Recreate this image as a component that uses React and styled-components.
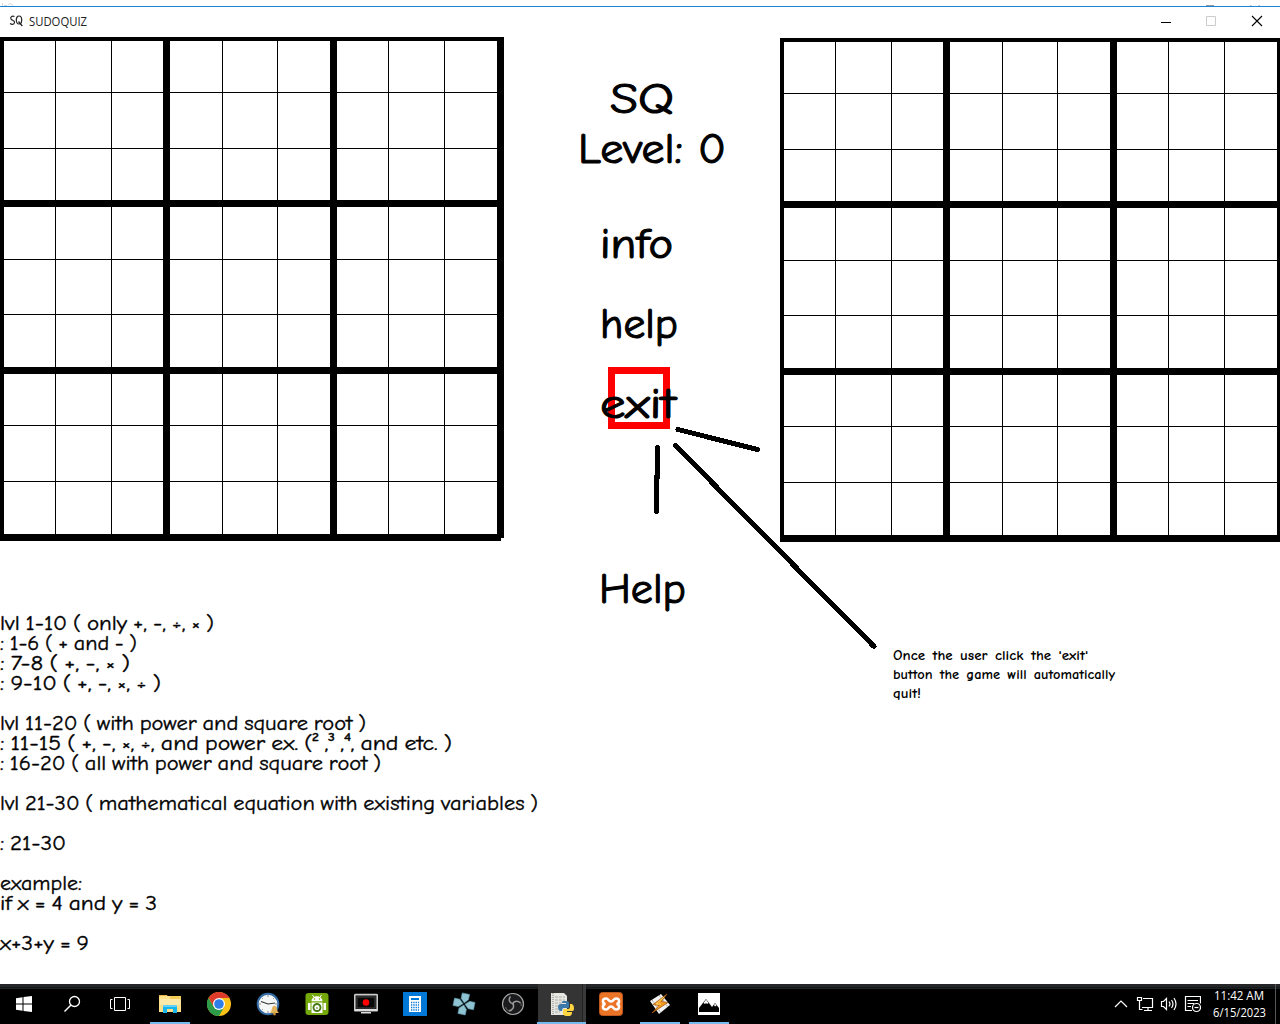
import React, { useLayoutEffect, useRef, useState } from "react";
import styled, { createGlobalStyle } from "styled-components";

const Global = createGlobalStyle`
  * { box-sizing: border-box; }
  body { margin: 0; background: #fff; overflow: hidden; }
`;
const hand = `"Comic Sans MS", "Comic Neue", Inter, "Noto Sans", sans-serif`;
const ui = `"Segoe UI", "Open Sans", "Noto Sans", sans-serif`;

const Screen = styled.div`
  position: relative;
  width: 1280px;
  height: 1024px;
  overflow: hidden;
  display: flex;
  flex-direction: column;
  background: #fff;
  color: #000;
`;
const Behind = styled.div`
  height: 6px;
  flex: none;
  svg { display: block; }
`;
const TitleBar = styled.header`
  height: 31px;
  flex: none;
  border-top: 1px solid #1883d7;
  display: flex;
  align-items: center;
  padding: 0 17px 2px 9px;
  font: 12px/16px ${ui};
`;
const AppTitle = styled.div`
  margin-left: 6px;
  padding-top: 2px;
  flex: 1;
  color: #222;
`;
const WindowButtons = styled.div`
  display: flex;
  gap: 34px;
  svg { display: block; }
`;
const Game = styled.main`
  flex: 1;
  min-height: 0;
  display: flex;
  align-items: flex-start;
`;
const Left = styled.section`
  width: 504px;
  flex: none;
`;
const Middle = styled.section`
  width: 276px;
  flex: none;
  padding-top: 1px;
  font: 43px/50px ${hand};
  -webkit-text-stroke: 1.1px #000;
`;
const Right = styled.section`
  width: 500px;
  flex: none;
  padding-top: 1px;
  overflow: hidden;
`;
const BoardGrid = styled.div`
  width: 504px;
  height: 504px;
  padding: 4px 7px 7px 4px;
  display: grid;
  grid-template: 159px 160px 160px / 159px 160px 160px;
  gap: 7px;
  background: #000;
  clip-path: ${(p) => (p.$notched ? "polygon(0 0, 100% 0, 100% 501px, 501px 501px, 501px 100%, 0 100%)" : "none")};
`;
const tracks = ["51px 55px 51px", "52px 54px 52px", "51px 55px 52px"];
const Box = styled.div`
  display: grid;
  grid-template-columns: ${(p) => tracks[p.$col]};
  grid-template-rows: ${(p) => tracks[p.$row]};
  gap: 1px;
`;
const Cell = styled.div`
  background: #fff;
`;
const Row = styled.div`
  height: ${(p) => p.$h}px;
  line-height: ${(p) => p.$h}px;
  margin-top: ${(p) => p.$top || 0}px;
  padding-left: ${(p) => p.$left || 0}px;
  white-space: pre;
`;
const Notes = styled.div`
  margin-top: 73px;
  font: 20.5px/20px ${hand};
  word-spacing: -1.6px;
  -webkit-text-stroke: 0.35px #000;
`;
const Caption = styled.div`
  margin: 104px 0 0 113px;
  font: 700 14px/19px ${hand};
  word-spacing: 2px;
`;
const FitSpan = styled.span`
  display: inline-block;
  white-space: pre;
  transform-origin: 0 50%;
`;
const RedFrame = styled.div`
  position: absolute;
  left: 608px;
  top: 367px;
  width: 62px;
  height: 62px;
  border: 7px solid #f00;
`;
const Strokes = styled.svg`
  position: absolute;
  left: 640px;
  top: 420px;
`;
const Front = styled.div`
  position: relative;
  z-index: 1;
`;
const Taskbar = styled.footer`
  height: 40px;
  flex: none;
  display: flex;
  background: linear-gradient(#252627 0 3px, #16191b 3px 4px, #1d2225 4px 5px, #000 5px);
  color: #fff;
`;
const Slot = styled.div`
  width: ${(p) => p.$w || 49}px;
  margin-left: ${(p) => p.$ml || 0}px;
  height: 40px;
  display: flex;
  align-items: center;
  justify-content: center;
  background: ${(p) => (p.$active ? "linear-gradient(90deg, transparent 1px, #343434 1px 45px, #222 45px 46px, #3a3a3a 46px)" : "none")};
  box-shadow: ${(p) => (p.$active ? "inset 0 -2px #76b9ed" : "none")};
  svg { display: block; }
`;
const Running = styled.div`
  width: 40px;
  height: 40px;
  display: flex;
  align-items: center;
  justify-content: center;
  border-bottom: 2px solid #76b9ed;
  padding-top: 2px;
`;
const Tray = styled.div`
  margin-left: auto;
  display: flex;
  align-items: center;
  padding-right: 4px;
  border-right: 1px solid #555;
  margin-right: 4px;
  width: 166px;
  svg { flex: none; }
`;
const Clock = styled.div`
  margin-left: auto;
  width: 53px;
  font: 12px/17px ${ui};
  padding: 0 0 1px;
  margin-right: 5px;
`;

/* Stretches a run of text horizontally to a given width. */
function Fit({ width, children }) {
  const ref = useRef(null);
  const [scale, setScale] = useState(1);
  useLayoutEffect(() => {
    setScale(width / parseFloat(getComputedStyle(ref.current).width));
  }, [width, children]);
  return <FitSpan ref={ref} style={{ transform: `scaleX(${scale})` }}>{children}</FitSpan>;
}

function Board({ notched }) {
  return (
    <BoardGrid $notched={notched}>
      {Array.from({ length: 9 }, (_, b) => (
        <Box key={b} $col={b % 3} $row={Math.floor(b / 3)}>
          {Array.from({ length: 9 }, (_, c) => <Cell key={c} />)}
        </Box>
      ))}
    </BoardGrid>
  );
}

const menu = [
  { text: "SQ", left: 106, top: 36, w: 64 },
  { text: "Level: 0", left: 74, top: 0, w: 148 },
  { text: "info", left: 96, top: 45, w: 73 },
  { text: "help", left: 96, top: 30, w: 78 },
  { text: "exit", left: 96, top: 30, w: 76 },
  { text: "Help", left: 95, top: 135, w: 87 },
];
const notes = [
  ["lvl 1-10 ( only +, -, ÷, × )", 214],
  [": 1-6 ( + and - )", 137],
  [": 7-8 ( +, -, × )", 130],
  [": 9-10 ( +, -, ×, ÷ )", 161],
  null,
  ["lvl 11-20 ( with power and square root )", 366],
  [": 11-15 ( +, -, ×, ÷, and power ex. (² ,³ ,⁴, and etc. )", 452],
  [": 16-20 ( all with power and square root )", 381],
  null,
  ["lvl 21-30 ( mathematical equation with existing variables )", 538],
  null,
  [": 21-30", 66],
  null,
  ["example:", 82],
  ["if x = 4 and y = 3", 157],
  null,
  ["x+3+y = 9", 89],
];
const caption = [
  ["Once the user click the 'exit'", 195],
  ["button the game will automatically", 222],
  ["quit!", 28],
];

const Ic = ({ s = 24, children }) => (
  <svg width={s} height={s} viewBox={`0 0 ${s} ${s}`} fill="none">{children}</svg>
);
const WindowsIcon = () => (
  <Ic><path fill="#fff" d="M4 6.2 10.5 5.3V11.5H4zM11.5 5.1 20 4v7.5h-8.5zM4 12.5h6.5v6.2L4 17.8zM11.5 12.5H20V20l-8.5-1.1z" /></Ic>
);
const SearchIcon = () => (
  <Ic><circle cx="14.5" cy="9.5" r="5" stroke="#fff" strokeWidth="1.3" /><path d="M11 13 4.5 19.5" stroke="#fff" strokeWidth="1.4" /></Ic>
);
const TaskViewIcon = () => (
  <Ic><path stroke="#fff" d="M6.5 5.5h11v13h-11zM4.5 7.5h-2v9h2M19.5 7.5h2v9h-2" /></Ic>
);
const FolderIcon = () => (
  <Ic>
    <path fill="#e8b43c" d="M1 3h8l1 2h-9z" /><path fill="#ffe08a" d="M1 5l1-1h21v16H1z" /><path fill="#f6cb58" d="M12 4h11v3H12z" />
    <path fill="#ffe9a8" d="M2 7h20v6H2z" /><path fill="#19b5ef" d="M5 13h14v8h-4v-4H9v4H5z" /><path fill="#62d0f7" d="M5 13h14v2H5z" />
  </Ic>
);
const ChromeIcon = () => (
  <Ic>
    <circle cx="12" cy="12" r="12" fill="#fbc116" />
    <path fill="#dd3b2c" d="M1.6 6A12 12 0 0 1 22.4 6H12L6.8 15z" />
    <path fill="#2c9c4b" d="M1.6 6A12 12 0 0 0 12 24l5.2-9L6.8 15z" />
    <circle cx="12" cy="12" r="6" fill="#fff" /><circle cx="12" cy="12" r="4.8" fill="#2f7de9" />
  </Ic>
);
const AlarmIcon = () => (
  <Ic>
    <circle cx="12" cy="12" r="10.3" fill="#f5f7f7" stroke="#356ca4" strokeWidth="2" />
    <path d="M12 3v2M12 19v2M3 12h2M19 12h2M5.7 5.7l1 1M18.3 5.7l-1 1M5.7 18.3l1-1" stroke="#889" />
    <path d="M5 9.5 12 12l7-1" stroke="#333" strokeWidth="1.2" />
    <path d="M13.500 21c3-1 1.500-7 5-7.500C22 14 20 20 23.500 21z" fill="#e3b35b" /><circle cx="18.5" cy="22" r="1.4" fill="#c99037" />
  </Ic>
);
const AndroidIcon = () => (
  <Ic>
    <rect x=".5" y="1" width="23" height="22" rx="3" fill="#74a80b" />
    <path d="M6.500 9.300c.3-6.700 10.700-6.700 11 0z" fill="#fff" /><path d="M7.500 3l1.700 2.500M16.500 3l-1.700 2.500" stroke="#fff" />
    <path fill="#fff" d="M6.500 10.500h11V21h-11zM3 11h2.500v7H3zM18.500 11H21v7h-2.500z" />
    <circle cx="9.500" cy="7" r=".8" fill="#74a80b" /><circle cx="14.500" cy="7" r=".8" fill="#74a80b" />
    <circle cx="12" cy="15.500" r="3.500" stroke="#477914" strokeWidth="1.900" /><path d="M12 15v2" stroke="#477914" />
  </Ic>
);
const RecorderIcon = () => (
  <Ic>
    <rect x=".7" y="2.700" width="22.600" height="16" rx="1" fill="#111" stroke="#c9c9c9" strokeWidth="1.800" />
    <rect x="3" y="5" width="18" height="11" fill="#080808" stroke="#444" /><circle cx="12" cy="10.500" r="3.300" fill="#f00" />
    <path fill="#ddd" d="M1 17h22v2H1zM7 20h10v1.500H7z" />
  </Ic>
);
const CalcIcon = () => (
  <Ic>
    <path fill="#0078d7" d="M0 0h24v24H0z" /><path fill="#fff" d="M6 4h12v16H6z" /><path fill="#0078d7" d="M8 6h8v2H8z" />
    <path stroke="#0078d7" strokeWidth="1.300" strokeDasharray="1.300 1" d="M8 10.500h8M8 13h8M8 15.500h8M8 18h8" />
  </Ic>
);
const PadIcon = () => (
  <Ic>
    <g transform="rotate(12 12 12)" fill="#8fc3d1" stroke="#5b93a5" strokeWidth=".6">
      <path d="M8 1.500h7.500V7L12 11 8 7z" /><path d="M8 22.500h7.500V17L12 13l-4 4z" />
      <path d="M1.500 8.200v7.500H7L11 12 7 8.200z" /><path d="M22.500 8.200v7.500H17L13 12l4-3.800z" />
    </g>
  </Ic>
);
const ObsIcon = () => (
  <Ic>
    <circle cx="12" cy="12" r="10.500" fill="#1b1a1d" stroke="#a8a8a8" strokeWidth="1.200" />
    <path d="M9.500 4.500c-2.500 3-1 6.500 2.500 7.500M12 12c0-2.500 4-4 7.500-1M12 12c1.500 2.500 0 6-4 7" stroke="#9a9a9a" strokeWidth="1.500" />
    <path d="M19.500 11q1 1 .5 3M8 19q-3-1-3.500-4" stroke="#666" />
  </Ic>
);
const PythonIcon = () => (
  <Ic>
    <path fill="#e7e7e2" d="M1 1h13l3 3v19H1z" /><path d="M3 1v22" stroke="#777" strokeDasharray="1 1" /><path d="M5 5h10M5 8h10M5 11h7M5 14h4M5 17h4M5 20h5" stroke="#aaa" strokeDasharray="3 1" />
    <path fill="#3c78aa" d="M13 9h4q2 0 2 2v4q0 1-1 1h-4q-2 0-2 3h-2q-2-1-2-4 0-3 3-3h5v-1h-4q0-2 1-2z" />
    <path fill="#ffd642" d="M16 24h4q2-1 2-3v-1h-5v-1h6q1 0 1-3 0-3-2-4h-2v3q0 2-2 2h-4q-1 0-1 2v3q1 2 3 2z" />
  </Ic>
);
const XamppIcon = () => (
  <Ic>
    <rect x=".5" y=".5" width="23" height="23" rx="3" fill="#ec7426" stroke="#bd581e" />
    <path d="M7 6.500c-4 0-4 5-.5 5.500-3.500.5-3.500 5.500.5 5.500 3 0 2-3 5-3s2 3 5 3c4 0 4-5 .5-5.500 3.500-.5 3.500-5.500-.5-5.500-3 0-2 3-5 3s-2-3-5-3z" stroke="#fff" strokeWidth="2.500" />
  </Ic>
);
const WinampIcon = () => (
  <Ic>
    <path fill="#f3f3f3" d="m2 9 11-7 9 11-11 9z" /><path d="m4 8 9 13M11 3l9 12" stroke="#777" strokeWidth=".7" strokeDasharray="2 1" />
    <path fill="#f29a20" stroke="#9b4d08" strokeWidth=".7" d="M19 2 5 12.500l6 1L4 21 20 10.500l-6.500-1z" /><path d="m16 5-8 7h5" stroke="#ffd66b" />
  </Ic>
);
const PhotosIcon = () => (
  <Ic><path fill="#fff" d="M1 1h22v22H1z" /><path fill="#000" d="M2 20v-4l7-9 6 8 3-4 4 5v4z" /><path fill="#fff" d="m8 9 1-1.500L11.500 11 10 12l-1-1-1 1-1.500-1zM17 13l1-1.500 1.500 2-1.500 1z" /></Ic>
);

const apps = [
  [FolderIcon, "running"], [ChromeIcon], [AlarmIcon], [AndroidIcon], [RecorderIcon], [CalcIcon], [PadIcon], [ObsIcon],
  [PythonIcon, "active"], [XamppIcon], [WinampIcon, "running"], [PhotosIcon, "running"],
];

export default function App() {
  return (
    <Screen>
      <Global />
      <Behind>
        <svg width="1280" height="6">
          <path d="M2.500 3v3M4 5.500h3M8 5c1-2 4-2 5 1" fill="none" stroke="#d5d5d5" />
          <path d="M1206 5.500h8" stroke="#999" /><path d="M1250 5.500h1.500M1258.500 5.500h1.500" stroke="#bbb" />
        </svg>
      </Behind>
      <TitleBar>
        <svg width="14" height="14" viewBox="0 0 14 14" fill="none" stroke="#222" strokeWidth="1.200">
          <path d="M5.500 2.500C3 1.500 1 3 2 5s4 1 3.500 3.500S2.500 10.500 1 9.500" /><ellipse cx="10" cy="6" rx="2.700" ry="4" /><path d="m9.500 7.500 3.800 4.500" />
        </svg>
        <AppTitle><Fit width={58}>SUDOQUIZ</Fit></AppTitle>
        <WindowButtons>
          <Ic s={12}><path d="M2 7.500h10" stroke="#000" /></Ic>
          <Ic s={12}><path d="M1.500 1.500h9v9h-9z" stroke="#ccc" /></Ic>
          <Ic s={12}><path d="m1 1 10 10M11 1 1 11" stroke="#000" strokeWidth="1.100" /></Ic>
        </WindowButtons>
      </TitleBar>
      <RedFrame />
      <Game>
        <Left>
          <Board notched />
          <Notes>
            {notes.map((n, i) => <Row key={i} $h={20}>{n && <Fit width={n[1]}>{n[0]}</Fit>}</Row>)}
          </Notes>
        </Left>
        <Middle>
          <Front>
            {menu.map((m) => (
              <Row key={m.text} $h={50} $left={m.left} $top={m.top}><Fit width={m.w}>{m.text}</Fit></Row>
            ))}
          </Front>
        </Middle>
        <Right>
          <Board />
          <Caption>
            {caption.map(([t, w]) => <Row key={t} $h={19}><Fit width={w}>{t}</Fit></Row>)}
          </Caption>
        </Right>
      </Game>
      <Strokes width="240" height="232" fill="none" stroke="#000" strokeWidth="5" strokeLinecap="round" shapeRendering="crispEdges">
        <path d="M38 9.500 117.500 29.500" /><path d="M35.500 25.500 234 226.500" /><path d="M17.500 27.500V57M16.500 57V91.500" />
      </Strokes>
      <Taskbar>
        <Slot $w={48}><WindowsIcon /></Slot>
        <Slot $w={48}><SearchIcon /></Slot>
        <Slot $w={48}><TaskViewIcon /></Slot>
        {apps.map(([Icon, state], i) => (
          <Slot key={i} $ml={i === 0 ? 1 : 0} $active={state === "active"}>
            {state === "running" ? <Running><Icon /></Running> : <Icon />}
          </Slot>
        ))}
        <Tray>
          <svg width="91" height="24" viewBox="0 0 91 24" fill="none" stroke="#fff" strokeWidth="1.200">
            <path d="m5 15 6-6 6 6" />
            <path d="M33 6.500h9.500v9H32M38 16v3M34 18.500h8M27.500 5.500h4v3h-4zM29.500 9v8.500h3" />
            <path d="M51.500 9.500h2l3-3v11l-3-3h-2zM59 9.500q2 2.500 0 5M61.500 8q3 4 0 8M64 6q4 6 0 12" />
            <path d="M82 18.500h-6.500v-14h15v7M77.500 8.500H88M77.500 11.500H84M77.500 14.500H81" />
            <circle cx="86.500" cy="15.500" r="4" /><path d="M84.500 15.500h4" />
          </svg>
          <Clock><div><Row as="div" $h={17} $left={1}><Fit width={50}>11:42 AM</Fit></Row></div><Row $h={17}><Fit width={53}>6/15/2023</Fit></Row></Clock>
        </Tray>
      </Taskbar>
    </Screen>
  );
}
